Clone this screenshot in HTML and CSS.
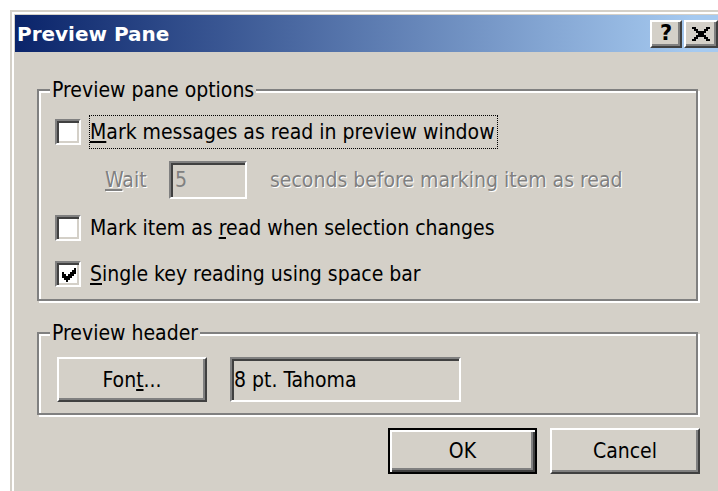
FILE: index.html
```html
<!DOCTYPE html>
<html lang="en">
<head>
<meta charset="utf-8">
<title>Preview Pane</title>
<link rel="stylesheet" href="styles.css">
</head>
<body>
<div class="window">
  <div class="frame">
    <div class="titlebar">
      <span class="title">Preview Pane</span>
      <div class="caption-buttons">
        <span class="cap-btn help">?</span>
        <span class="cap-btn close">
          <svg width="18" height="14" viewBox="0 0 9 7" shape-rendering="crispEdges" aria-hidden="true">
            <path d="M0 0h2v1h-2z M7 0h2v1h-2z M1 1h2v1h-2z M6 1h2v1h-2z M2 2h5v1h-5z M3 3h3v1h-3z M2 4h5v1h-5z M1 5h2v1h-2z M6 5h2v1h-2z M0 6h2v1h-2z M7 6h2v1h-2z" fill="#000"/>
          </svg>
        </span>
      </div>
    </div>

    <div class="content">
      <fieldset class="group">
        <legend>Preview pane options</legend>
        <div class="rows">
          <div class="row">
            <span class="check"></span>
            <span class="label focus"><u>M</u>ark messages as read in preview window</span>
          </div>
          <div class="row wait-row">
            <span class="wait-label disabled"><u>W</u>ait</span>
            <span class="field small"><span class="disabled-value">5</span></span>
            <span class="wait-text disabled">seconds before marking item as read</span>
          </div>
          <div class="row">
            <span class="check"></span>
            <span class="label">Mark item as <u>r</u>ead when selection changes</span>
          </div>
          <div class="row">
            <span class="check">
              <svg width="14" height="14" viewBox="0 0 7 7" shape-rendering="crispEdges" aria-hidden="true">
                <path d="M6 0h1v1h-1z M5 1h2v1h-2z M0 2h1v1h-1z M4 2h3v1h-3z M0 3h2v1h-2z M3 3h3v1h-3z M0 4h5v1h-5z M1 5h3v1h-3z M2 6h1v1h-1z" fill="#000"/>
              </svg>
            </span>
            <span class="label"><u>S</u>ingle key reading using space bar</span>
          </div>
        </div>
      </fieldset>

      <fieldset class="group header-group">
        <legend>Preview header</legend>
        <div class="header-row">
          <button class="btn font-btn" type="button">Fon<u>t</u>...</button>
          <span class="field wide">8 pt. Tahoma</span>
        </div>
      </fieldset>

      <div class="actions">
        <button class="btn default" type="button">OK</button>
        <button class="btn" type="button">Cancel</button>
      </div>
    </div>
  </div>
</div>
</body>
</html>
```

FILE: styles.css
```css
* {
  box-sizing: border-box;
}

html,
body {
  margin: 0;
  height: 100%;
}

body {
  background: #fff;
  overflow: hidden;
  font-family: "DejaVu Sans Condensed", "DejaVu Sans", sans-serif;
  font-stretch: condensed;
  font-size: 21px;
  color: #000;
}

/* window frame: light outer edge, white bevel, dark right/bottom edges */
.window {
  margin: 10px 0 0 10px;
  width: 717px;
  height: 500px;
  background: #d4d0c8;
  padding: 2px 0 0 2px;
  border-right: 2px solid #404040;
}

.frame {
  height: 100%;
  border-top: 2px solid #fff;
  border-left: 2px solid #fff;
  border-right: 2px solid #808080;
  padding: 1px 1px 0 1px;
}

/* caption */
.titlebar {
  height: 37px;
  display: flex;
  align-items: center;
  padding-left: 2px;
  background: linear-gradient(to right, #0a246a, #a6caf0 96%);
}

.title {
  color: #fff;
  font-family: "DejaVu Sans", sans-serif;
  font-stretch: normal;
  font-weight: bold;
  font-size: 20px;
}

.caption-buttons {
  margin-left: auto;
  margin-right: 4px;
  display: flex;
  gap: 2px;
}

.cap-btn {
  width: 32px;
  height: 28px;
  background: #d4d0c8;
  border: 2px solid;
  border-color: #fff #404040 #404040 #fff;
  box-shadow: inset -2px -2px 0 #808080;
  display: flex;
  align-items: center;
  justify-content: center;
}

.cap-btn.close {
  width: 34px;
}

.cap-btn.help {
  font-family: "DejaVu Sans", sans-serif;
  font-stretch: normal;
  font-weight: bold;
  font-size: 21px;
  line-height: 1;
  padding-bottom: 1px;
}

/* dialog body */
.content {
  padding: 27px 24px 0 22px;
}

/* etched group box */
.group {
  margin: 0;
  padding: 0;
  min-width: 0;
  border: 2px solid #808080;
  box-shadow: inset 2px 2px 0 #fff, 2px 2px 0 #fff;
}

.group legend {
  margin-left: 11px;
  padding: 0 2px;
  line-height: 22px;
  background: #d4d0c8;
}

.header-group {
  margin-top: 21px;
}

.rows {
  display: flex;
  flex-direction: column;
  gap: 12px;
  padding: 14px 0 8px 16px;
}

.row {
  display: flex;
  align-items: center;
  height: 34px;
}

.check {
  width: 26px;
  height: 26px;
  flex: none;
  background: #fff;
  border: 2px solid;
  border-color: #808080 #fff #fff #808080;
  box-shadow: inset 2px 2px 0 #404040, inset -2px -2px 0 #d4d0c8;
  display: flex;
  align-items: center;
  justify-content: center;
}

.check svg {
  margin: 1px 0 0 1px;
}

.label {
  margin-left: 8px;
  height: 34px;
  line-height: 32px;
  padding-right: 2px;
  border: 1px dotted transparent;
  white-space: nowrap;
}

.label.focus {
  border-color: #000;
}

u {
  text-decoration-thickness: 2px;
  text-underline-offset: 2px;
}

.disabled {
  color: #808080;
  text-shadow: 1px 1px 0 #fff;
  white-space: nowrap;
}

.wait-row {
  height: 38px;
}

.wait-label {
  width: 64px;
  margin-left: 50px;
}

.wait-text {
  margin-left: 23px;
}

/* sunken edit box */
.field {
  border: 2px solid;
  border-color: #808080 #fff #fff #808080;
  box-shadow: inset 2px 2px 0 #404040, inset -2px -2px 0 #d4d0c8;
  background: #d4d0c8;
  display: flex;
  align-items: center;
  white-space: nowrap;
}

.field.small {
  width: 78px;
  height: 38px;
  padding-left: 4px;
}

.disabled-value {
  color: #808080;
}

.field.wide {
  width: 231px;
  height: 45px;
  padding-left: 2px;
}

.header-row {
  display: flex;
  gap: 23px;
  padding: 13px 0 11px 18px;
}

/* push buttons */
.btn {
  font: inherit;
  color: #000;
  width: 150px;
  height: 46px;
  padding: 0;
  background: #d4d0c8;
  border: 2px solid;
  border-color: #fff #404040 #404040 #fff;
  box-shadow: inset -2px -2px 0 #808080;
}

.font-btn {
  height: 45px;
}

.btn.default {
  width: 149px;
  border: 2px solid #000;
  box-shadow: inset 2px 2px 0 #fff, inset -2px -2px 0 #404040, inset -4px -4px 0 #808080;
}

.actions {
  display: flex;
  justify-content: flex-end;
  gap: 13px;
  margin: 13px -2px 0 0;
}
```
